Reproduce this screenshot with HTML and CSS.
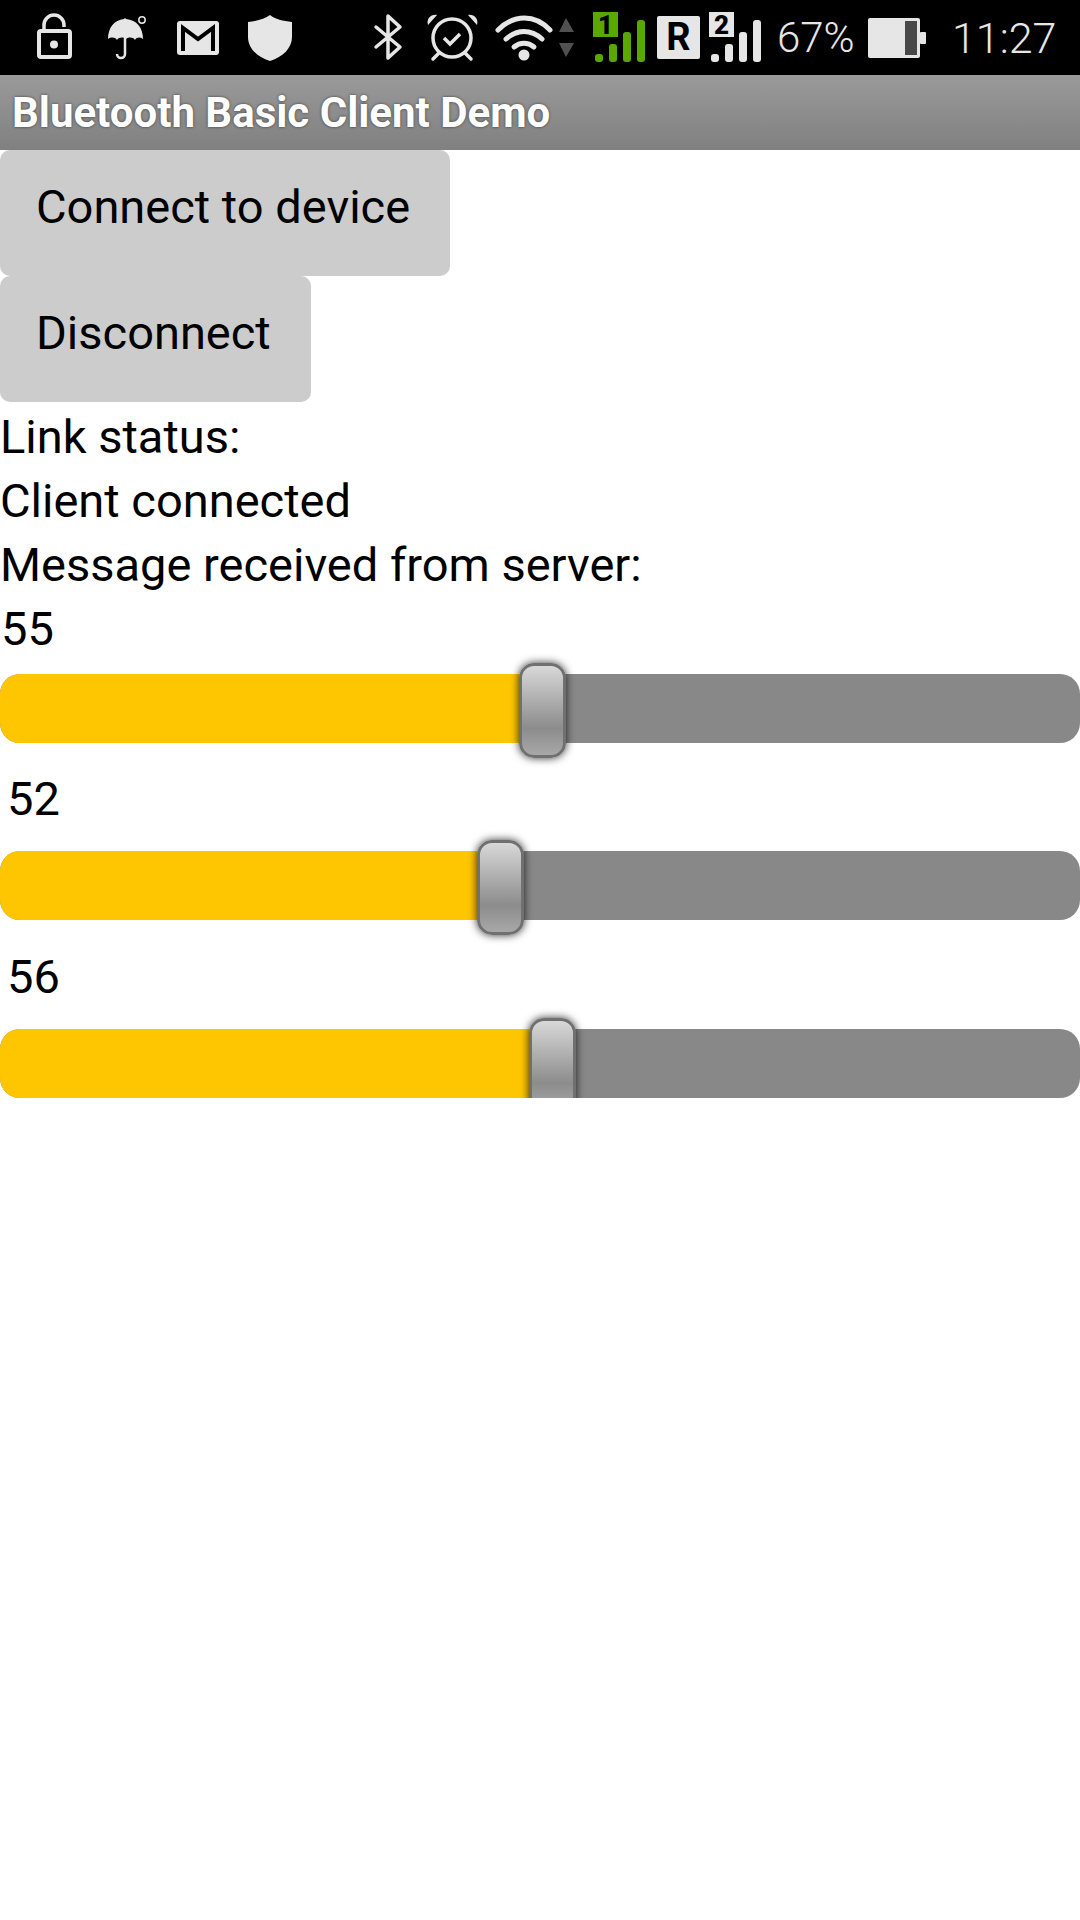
FILE: index.html
```html
<!DOCTYPE html>
<html lang="en">
<head>
  <meta charset="UTF-8" />
  <meta name="viewport" content="width=device-width, initial-scale=1.0"/>
  <title>Bluetooth Basic Client Demo</title>
  <link rel="stylesheet" href="styles.css">
</head>
<body>

  <div class="status-bar">
    <div class="status-left">
      <!-- lock -->
      <svg class="cell" viewBox="18 0 72 75">
        <path d="M44 31V25a10 10 0 0 1 20 0v2" fill="none" stroke="#e6e6e6" stroke-width="3.500"/>
        <rect x="39" y="31" width="31" height="26" rx="2" fill="none" stroke="#e6e6e6" stroke-width="4"/>
        <circle cx="54" cy="44.500" r="4" fill="#e6e6e6"/>
      </svg>
      <!-- umbrella -->
      <svg class="cell" viewBox="90 0 72 75">
        <path d="M124 19l1-1 1 1c11 1 17 9 17 20-3-2-6-2-8 1-2-3-6-3-9-1v0c-3-2-7-2-9 1-2-3-6-3-9-1 0-11 6-19 16-20z" fill="#e6e6e6"/>
        <path d="M125 38v16a4 4 0 0 1-8 0" fill="none" stroke="#e6e6e6" stroke-width="2.500"/>
        <circle cx="142" cy="20" r="3.200" fill="none" stroke="#e6e6e6" stroke-width="1.500"/>
      </svg>
      <!-- mail -->
      <svg class="cell" viewBox="162 0 72 75">
        <rect x="177" y="21" width="42" height="34" rx="3" fill="#e6e6e6"/>
        <path d="M183 51V28l15 11 15-11v23" fill="none" stroke="#000" stroke-width="4"/>
      </svg>
      <!-- shield -->
      <svg class="cell" viewBox="234 0 72 75">
        <path d="M270 15c5 4 13 6 22 7v15c0 11-9 20-22 24-13-4-22-13-22-24V22c9-1 17-3 22-7z" fill="#e6e6e6"/>
      </svg>
    </div>
    <svg class="status-icons" viewBox="370 0 400 75">
      <!-- bluetooth -->
      <path d="M376 27l24 20-12 11V16l12 11-24 20" fill="none" stroke="#e6e6e6" stroke-width="3.500" stroke-linejoin="round" stroke-linecap="round"/>
      <!-- alarm -->
      <circle cx="452" cy="38" r="19" fill="none" stroke="#e6e6e6" stroke-width="3.500"/>
      <path d="M444 38l6 6 10-10" fill="none" stroke="#e6e6e6" stroke-width="3.500"/>
      <path d="M428 25c-2-6 3-11 9-10zM477 25c2-6-3-11-9-10z" fill="#e6e6e6"/>
      <path d="M439 53l-6 6M465 53l6 6" stroke="#e6e6e6" stroke-width="3.500" stroke-linecap="round"/>
      <!-- wifi -->
      <path d="M498 30c16-16 37-16 52 0" fill="none" stroke="#e6e6e6" stroke-width="5" stroke-linecap="round"/>
      <path d="M506 39c11-10 25-10 36 0" fill="none" stroke="#e6e6e6" stroke-width="5" stroke-linecap="round"/>
      <path d="M514 47c6-5 14-5 20 0" fill="none" stroke="#e6e6e6" stroke-width="5" stroke-linecap="round"/>
      <circle cx="524" cy="55" r="5.500" fill="#e6e6e6"/>
      <!-- data arrows -->
      <path d="M566 18l8 14h-15zM559 43h15l-8 14z" fill="#505050"/>
      <!-- sim 1 -->
      <rect x="593" y="12" width="25" height="25" fill="#5aa700"/>
      <text x="605.500" y="34" class="sim-num">1</text>
      <rect x="595" y="54" width="8" height="8" rx="3" fill="#5aa700"/>
      <rect x="609" y="44" width="8" height="18" rx="3" fill="#5aa700"/>
      <rect x="623" y="32" width="8" height="30" rx="3" fill="#5aa700"/>
      <rect x="637" y="20" width="8" height="42" rx="3" fill="#5aa700"/>
      <!-- roaming -->
      <rect x="657" y="16" width="43" height="43" rx="2" fill="#e6e6e6"/>
      <text x="678.500" y="50" class="sim-num sim-big">R</text>
      <!-- sim 2 -->
      <rect x="709" y="12" width="25" height="25" fill="#e6e6e6"/>
      <text x="721.500" y="34" class="sim-num">2</text>
      <rect x="711" y="54" width="8" height="8" rx="3" fill="#e6e6e6"/>
      <rect x="725" y="44" width="8" height="18" rx="3" fill="#e6e6e6"/>
      <rect x="739" y="32" width="8" height="30" rx="3" fill="#e6e6e6"/>
      <rect x="753" y="20" width="8" height="42" rx="3" fill="#e6e6e6"/>
    </svg>
    <span class="percent">67%</span>
    <svg class="battery" viewBox="0 0 58 40">
      <rect x="0" y="0" width="52" height="40" rx="2" fill="#e6e6e6"/>
      <rect x="37" y="3" width="12" height="34" fill="#484848"/>
      <rect x="52" y="14" width="6" height="12" rx="1" fill="#e6e6e6"/>
    </svg>
    <span class="clock">11:27</span>
  </div>

  <div class="title-bar">Bluetooth Basic Client Demo</div>

  <button class="btn">Connect to device</button>
  <button class="btn">Disconnect</button>

  <div class="lines">
    <div class="line">Link status:</div>
    <div class="line">Client connected</div>
    <div class="line">Message received from server:</div>
  </div>

  <div class="slider first">
    <div class="value">55</div>
    <div class="track"><div class="fill" style="width: 50.3%"><div class="thumb"></div></div></div>
  </div>
  <div class="slider">
    <div class="value">52</div>
    <div class="track"><div class="fill" style="width: 46.4%"><div class="thumb"></div></div></div>
  </div>
  <div class="slider">
    <div class="value">56</div>
    <div class="track"><div class="fill" style="width: 51.2%"><div class="thumb"></div></div></div>
  </div>

</body>
</html>
```

FILE: styles.css
```css
body {
  margin: 0;
  background: white;
  font-family: Roboto, sans-serif;
  color: #000;
}

.status-bar {
  height: 75px;
  background: #000;
  display: flex;
  align-items: center;
  color: #e6e6e6;
}

.status-left {
  display: flex;
  padding-left: 18px;
}

.cell {
  width: 72px;
  height: 75px;
}

.status-icons {
  width: 400px;
  height: 75px;
  margin-left: 64px;
}

.sim-num {
  font-family: Roboto, sans-serif;
  font-weight: 900;
  font-size: 26px;
  text-anchor: middle;
  fill: #000;
}

.sim-big {
  font-size: 38px;
  font-weight: 700;
}

.percent {
  margin-left: 7px;
  font-size: 42px;
  font-weight: 300;
  width: 91px;
}

.battery {
  width: 58px;
  height: 40px;
}

.clock {
  margin-left: 26px;
  font-size: 43px;
  font-weight: 300;
}

.title-bar {
  height: 75px;
  line-height: 75px;
  padding-left: 12px;
  background: linear-gradient(#9a9a9a, #808080);
  color: white;
  font-size: 42px;
  font-weight: 700;
  text-shadow: 0 0 3px rgba(0,0,0,0.6);
}

.btn {
  display: block;
  height: 126px;
  padding: 0 40px 14px 36px;
  border: none;
  border-radius: 10px;
  background-color: #ccc;
  color: #000;
  font-family: Roboto, sans-serif;
  font-size: 47px;
}

.lines {
  padding-top: 3px;
}

.line {
  height: 64px;
  line-height: 64px;
  font-size: 47px;
}

.value {
  height: 64px;
  line-height: 64px;
  padding-left: 7px;
  font-size: 47px;
}

.slider {
  padding-top: 24.4px;
}

.slider.first {
  padding-top: 0;
}

.slider.first .value {
  padding-left: 1px;
  margin-bottom: 13px;
}

.slider .value {
  margin-bottom: 20px;
}

.track {
  height: 69px;
  border-radius: 20px;
  background-color: #888;
}

.fill {
  position: relative;
  height: 100%;
  border-radius: 20px 0 0 20px;
  background-color: #fec600;
}

.thumb {
  position: absolute;
  right: -23px;
  top: -11px;
  width: 41px;
  height: 89px;
  border: 3px solid #707070;
  border-radius: 15px;
  background: linear-gradient(#d8d8d8, #8c8c8c 70%, #a8a8a8);
  box-shadow: 0 0 9px rgba(0,0,0,0.8);
}
```
